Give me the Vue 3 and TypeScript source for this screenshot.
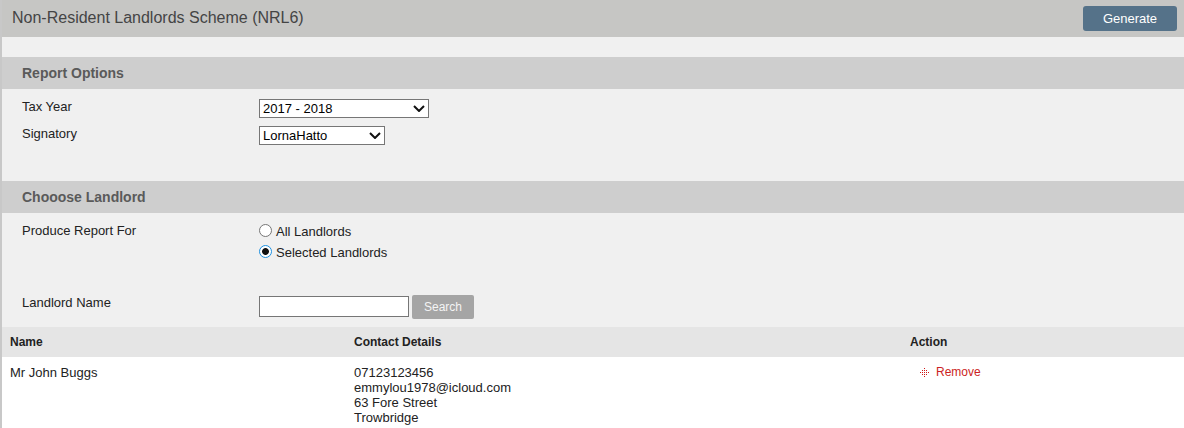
<template>
  <div class="page">
    <header class="title-bar">
      <h1>Non-Resident Landlords Scheme (NRL6)</h1>
      <button class="generate" type="button">Generate</button>
    </header>

    <section class="report-options">
      <h2>Report Options</h2>
      <div class="form-row year-row">
        <label>Tax Year</label>
        <span class="select-wrap year">
          <select v-model="taxYear">
            <option v-for="y in taxYears" :key="y">{{ y }}</option>
          </select>
          <svg viewBox="0 0 12 7" width="12" height="7"><path d="M1 1l5 5 5-5" fill="none" stroke="#111" stroke-width="2" /></svg>
        </span>
      </div>
      <div class="form-row signatory-row">
        <label>Signatory</label>
        <span class="select-wrap signatory">
          <select v-model="signatory">
            <option>LornaHatto</option>
          </select>
          <svg viewBox="0 0 12 7" width="12" height="7"><path d="M1 1l5 5 5-5" fill="none" stroke="#111" stroke-width="2" /></svg>
        </span>
      </div>
    </section>

    <section class="choose-landlord">
      <h2>Chooose Landlord</h2>
      <div class="form-row produce-row">
        <label>Produce Report For</label>
        <div class="radios">
          <label class="radio"><input v-model="scope" type="radio" value="all" />All Landlords</label>
          <label class="radio"><input v-model="scope" type="radio" value="selected" />Selected Landlords</label>
        </div>
      </div>
      <div class="form-row search-row">
        <label>Landlord Name</label>
        <input class="name-input" type="text" />
        <button class="search" type="button">Search</button>
      </div>
    </section>

    <table>
      <thead>
        <tr>
          <th class="col-name">Name</th>
          <th class="col-contact">Contact Details</th>
          <th>Action</th>
        </tr>
      </thead>
      <tbody>
        <tr v-for="row in landlords" :key="row.name">
          <td>{{ row.name }}</td>
          <td>
            <div v-for="line in row.contact" :key="line">{{ line }}</div>
          </td>
          <td>
            <a class="remove">
              <svg viewBox="0 0 9 9" width="9" height="9" shape-rendering="crispEdges">
                <path d="M4 0h1v1H4zM2 2h1v1H2zM4 2h1v1H4zM6 2h1v1H6zM0 4h1v1H0zM2 4h1v1H2zM4 4h1v1H4zM6 4h1v1H6zM8 4h1v1H8zM2 6h1v1H2zM4 6h1v1H4zM6 6h1v1H6zM4 8h1v1H4z" fill="#d01818" />
              </svg>
              Remove
            </a>
          </td>
        </tr>
      </tbody>
    </table>
  </div>
</template>

<script setup lang="ts">
import { ref } from 'vue'

interface Landlord {
  name: string
  contact: string[]
}

const taxYears = ['2017 - 2018', '2016 - 2017']
const taxYear = ref('2017 - 2018')
const signatory = ref('LornaHatto')
const scope = ref('selected')

const landlords: Landlord[] = [
  {
    name: 'Mr John Buggs',
    contact: ['07123123456', 'emmylou1978@icloud.com', '63 Fore Street', 'Trowbridge'],
  },
]
</script>

<style>
html,
body {
  margin: 0;
  background: #fff;
}
</style>

<style scoped>
.page {
  height: 428px;
  overflow: hidden;
  box-sizing: border-box;
  border-left: 2px solid #c8c8c8;
  background: #f0f0f0;
  font-family: "Liberation Sans", Arial, sans-serif;
  font-size: 13px;
  color: #222;
}

.title-bar {
  height: 37px;
  margin-left: -2px;
  padding: 0 7px 0 12px;
  background: #c6c6c4;
  display: flex;
  align-items: center;
  justify-content: space-between;
}

h1 {
  margin: 0 0 2px;
  font-size: 16px;
  font-weight: 400;
  color: #444;
}

.generate {
  width: 94px;
  height: 25px;
  margin-bottom: 1px;
  border: 0;
  border-radius: 3px;
  background: #557289;
  color: #fff;
  font: 13px "Liberation Sans", Arial, sans-serif;
}

.report-options {
  margin-top: 20px;
  height: 124px;
}

.choose-landlord {
  height: 146px;
}

h2 {
  margin: 0;
  height: 32px;
  padding-left: 20px;
  line-height: 32px;
  background: #cecece;
  font-size: 14px;
  font-weight: 700;
  color: #5a5a5a;
}

.form-row {
  display: flex;
  padding-left: 20px;
}

.form-row > label {
  width: 237px;
  flex: none;
  line-height: 14px;
  padding-top: 1px;
}

.year-row {
  margin-top: 10px;
}

.signatory-row {
  margin-top: 8px;
}

.select-wrap {
  position: relative;
  display: block;
}

.select-wrap select {
  appearance: none;
  display: block;
  width: 100%;
  height: 19px;
  box-sizing: border-box;
  padding: 0 0 0 3px;
  border: 1px solid #767676;
  border-radius: 0;
  background: #fff;
  color: #000;
  font: 13px "Liberation Sans", Arial, sans-serif;
}

.select-wrap svg {
  position: absolute;
  right: 4px;
  top: 6px;
  pointer-events: none;
}

.year {
  width: 170px;
}

.signatory {
  width: 126px;
}

.produce-row {
  margin-top: 10px;
}

.radios {
  display: flex;
  flex-direction: column;
  gap: 7px;
  padding-top: 1px;
}

.radio {
  display: flex;
  align-items: center;
  height: 14px;
  color: #222;
}

.radio input {
  appearance: none;
  box-sizing: border-box;
  width: 13px;
  height: 13px;
  margin: 0 4px 2px 0;
  border: 1px solid #767676;
  border-radius: 50%;
  background: #fff;
}

.radio input:checked {
  border: 1.5px solid #1e90e0;
  background: radial-gradient(circle, #111 0 3px, #fff 3.8px);
}

.search-row {
  margin-top: 36px;
}

.name-input {
  width: 150px;
  height: 21px;
  box-sizing: border-box;
  margin: 1px 0 0;
  padding: 0 3px;
  border: 1px solid #767676;
  background: #fff;
}

.search {
  width: 62px;
  height: 24px;
  margin: 0 0 0 3px;
  border: 0;
  border-radius: 2px;
  background: #a5a5a5;
  color: #f4f4f4;
  font: 12px "Liberation Sans", Arial, sans-serif;
}

table {
  width: 1182px;
  height: 101px;
  border-collapse: collapse;
  table-layout: fixed;
  background: #fff;
}

th {
  height: 30px;
  padding: 0 8px;
  background: #e5e5e5;
  text-align: left;
  font-size: 12px;
  color: #222;
}

td {
  padding: 8px 8px 0;
  vertical-align: top;
  line-height: 15px;
  font-size: 13px;
  color: #222;
}

.col-name {
  width: 328px;
}

.col-contact {
  width: 540px;
}

.remove {
  display: flex;
  align-items: center;
  gap: 7px;
  margin-left: 10px;
  color: #cc1f24;
  font-size: 12px;
  line-height: 15px;
}
</style>
